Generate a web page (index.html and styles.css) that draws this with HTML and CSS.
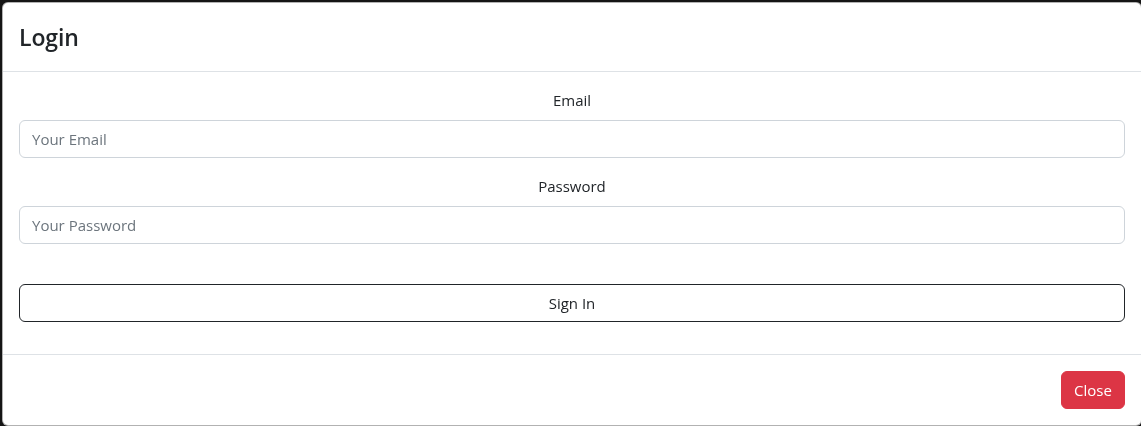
FILE: index.html
```html
<!DOCTYPE html>
<html lang="en">
<head>
<meta charset="utf-8">
<title>Login</title>
<link rel="stylesheet" href="styles.css">
</head>
<body>
  <div class="backdrop"></div>
  <div class="modal">
    <div class="modal-header">
      <h4 class="modal-title">Login</h4>
    </div>
    <div class="modal-body">
      <form class="login-form">
        <div class="field">
          <label class="field-label" for="email">Email</label>
          <input class="field-input" id="email" type="email" placeholder="Your Email">
        </div>
        <div class="field">
          <label class="field-label" for="password">Password</label>
          <input class="field-input" id="password" type="password" placeholder="Your Password">
        </div>
        <button type="button" class="btn btn-outline">Sign In</button>
      </form>
    </div>
    <div class="modal-footer">
      <button type="button" class="btn btn-danger">Close</button>
    </div>
  </div>
</body>
</html>
```
FILE: styles.css
```css
* { box-sizing: border-box; }
html, body {
  margin: 0;
  height: 100%;
}
body {
  font-family: "Open Sans", "Noto Sans", sans-serif;
  font-size: 15px;
  color: #212529;
  background: #2a2a2a;
  overflow: hidden;
}
.backdrop {
  position: fixed;
  inset: 0;
  background: rgba(0, 0, 0, 0.5);
}
.modal {
  position: fixed;
  left: 2px;
  top: 2px;
  width: 1140px;
  height: 424px;
  background: #fff;
  border: 1px solid rgba(0, 0, 0, 0.3);
  border-radius: 6px;
  display: flex;
  flex-direction: column;
}
.modal-header {
  height: 69px;
  padding: 16px;
  display: flex;
  align-items: center;
  border-bottom: 1px solid #dee2e6;
}
.modal-title {
  margin: 0;
  font-size: 23px;
  font-weight: 600;
  line-height: 38px;
  color: #212529;
  letter-spacing: -0.1px;
}
.modal-body {
  padding: 16px 16px 32px;
  border-bottom: 1px solid #dee2e6;
}
.login-form {
  display: flex;
  flex-direction: column;
}
.field {
  display: flex;
  flex-direction: column;
  margin-bottom: 16px;
}
.field-label {
  text-align: center;
  line-height: 24px;
  margin-bottom: 8px;
}
.field-input {
  height: 38px;
  padding: 6px 12px;
  font: inherit;
  color: #212529;
  border: 1px solid #ced4da;
  border-radius: 6px;
  background: #fff;
}
.field-input::placeholder {
  color: #6c757d;
}
.btn {
  height: 38px;
  padding: 6px 12px;
  font: inherit;
  line-height: 24px;
  border-radius: 6px;
  cursor: pointer;
}
.btn-outline {
  margin-top: 24px;
  background: #fff;
  color: #212529;
  border: 1px solid #212529;
}
.modal-footer {
  display: flex;
  justify-content: flex-end;
  padding: 16px 16px 0 16px;
}
.btn-danger {
  background: #dc3545;
  color: #fff;
  border: 1px solid #dc3545;
  width: 64px;
  padding: 6px 0;
}
```
